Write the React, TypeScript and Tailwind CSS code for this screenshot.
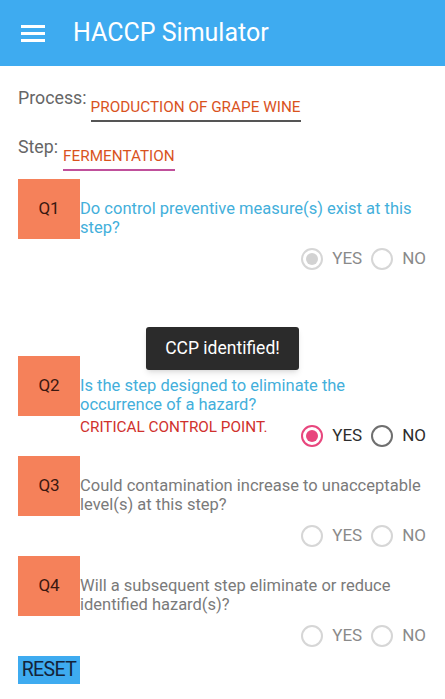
import { type ReactNode } from 'react';

type Choice = 'yes' | 'no' | null;

type QuestionProps = {
  label: string;
  text: string;
  textClass: string;
  value: Choice;
  disabled?: boolean;
  note?: ReactNode;
};

function Radio({ checked, tone }: { checked: boolean; tone: 'off' | 'pink' | 'dark' | 'disabled' }) {
  const ring =
    tone === 'pink'
      ? 'border-[#e8467d]'
      : tone === 'dark'
        ? 'border-[#6f6f6f]'
        : 'border-[#d6d6d6]';
  const dot = tone === 'pink' ? 'bg-[#e8467d]' : 'bg-[#d2d2d2]';
  return (
    <span className={`flex h-[22px] w-[22px] items-center justify-center rounded-full border-2 ${ring}`}>
      {checked ? <span className={`h-[12px] w-[12px] rounded-full ${dot}`} /> : null}
    </span>
  );
}

function Question({ label, text, textClass, value, disabled, note }: QuestionProps) {
  const active = value !== null && !disabled;
  const yesTone = disabled ? 'disabled' : active ? 'pink' : 'off';
  const noTone = disabled ? 'disabled' : active ? 'dark' : 'off';
  const labelColor = active ? 'text-[#2d2d2d]' : 'text-[#8a8a8a]';
  return (
    <div className="flex flex-col">
      <div className="flex items-start">
        <div className="flex h-[60px] w-[62px] shrink-0 items-center justify-center bg-[#f5815a] text-[17px] text-[#3a1810]">
          {label}
        </div>
        <p className={`mt-[20px] pr-4 text-[16.5px] leading-[19px] ${textClass}`}>{text}</p>
      </div>
      <div className="flex h-[40px] items-start">
        <div className="w-[62px] shrink-0" />
        <div className="flex-1 pt-[2px] text-[15.3px] leading-[18px] text-[#d0312d]">{note}</div>
        <div className="flex items-center gap-[9px] self-center pr-[19px] text-[17px]">
          <Radio checked={value === 'yes'} tone={yesTone} />
          <span className={labelColor}>YES</span>
          <Radio checked={value === 'no'} tone={noTone} />
          <span className={labelColor}>NO</span>
        </div>
      </div>
    </div>
  );
}

export default function App() {
  return (
    <div className="relative h-[699px] w-[445px] overflow-hidden bg-white font-['Roboto',sans-serif]">
      <header className="flex h-[66px] items-center bg-[#3eabf0]">
        <div className="ml-[21px] flex w-[24px] flex-col gap-[4px]">
          <span className="h-[3px] bg-white" />
          <span className="h-[3px] bg-white" />
          <span className="h-[3px] bg-white" />
        </div>
        <h1 className="ml-[28px] text-[25px] text-white">HACCP Simulator</h1>
      </header>

      <main className="px-[18px] pt-[22px]">
        <div className="flex items-start">
          <span className="text-[17.8px] leading-[20px] text-[#666]">Process:</span>
          <span className="mt-[9px] ml-[4px] border-b-2 border-[#555] pb-[3px] text-[15.3px] leading-[20px] text-[#d9531e]">
            PRODUCTION OF GRAPE WINE
          </span>
        </div>
        <div className="mt-[15px] flex items-start">
          <span className="text-[17.8px] leading-[20px] text-[#666]">Step:</span>
          <span className="mt-[9px] ml-[5px] border-b-2 border-[#c0509b] pb-[3px] text-[15.3px] leading-[20px] text-[#d9531e]">
            FERMENTATION
          </span>
        </div>

        <div className="mt-[8px] -mr-[18px]">
          <Question
            label="Q1"
            text="Do control preventive measure(s) exist at this step?"
            textClass="text-[#43afdb]"
            value="yes"
            disabled
          />
          <div className="h-[77px]" />
          <Question
            label="Q2"
            text="Is the step designed to eliminate the occurrence of a hazard?"
            textClass="text-[#43afdb]"
            value="yes"
            note="CRITICAL CONTROL POINT."
          />
          <Question
            label="Q3"
            text="Could contamination increase to unacceptable level(s) at this step?"
            textClass="text-[#7a7a7a]"
            value={null}
          />
          <Question
            label="Q4"
            text="Will a subsequent step eliminate or reduce identified hazard(s)?"
            textClass="text-[#7a7a7a]"
            value={null}
          />
        </div>

        <button className="flex h-[28px] w-[62px] items-center justify-center bg-[#3eabf0] text-[19.5px] tracking-[-0.6px] text-[#14233a]">
          RESET
        </button>
      </main>

      <div className="absolute top-[327px] left-[146px] flex h-[43px] w-[153px] items-center justify-center rounded-[3px] bg-[#2b2b2b] text-[17.5px] text-white shadow-md">
        CCP identified!
      </div>
    </div>
  );
}
